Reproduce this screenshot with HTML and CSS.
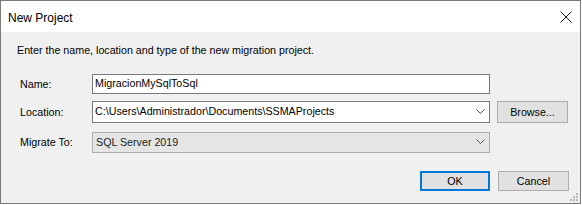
FILE: index.html
```html
<!DOCTYPE html>
<html>
<head>
<meta charset="utf-8">
<link rel="stylesheet" href="styles.css">
</head>
<body>
<div class="window">
  <div class="titlebar">
    <span class="title">New Project</span>
    <svg class="close" width="12" height="12" viewBox="0 0 12 12"><path d="M0.5 0.5 L11.5 11.5 M11.5 0.5 L0.5 11.5" stroke="#1a1a1a" stroke-width="1" fill="none"/></svg>
  </div>
  <div class="content">
    <p class="intro">Enter the name, location and type of the new migration project.</p>
    <div class="form">
      <label class="label">Name:</label>
      <div class="field">MigracionMySqlToSql</div>
      <div></div>

      <label class="label row2">Location:</label>
      <div class="field combo row2">
        <span>C:\Users\Administrador\Documents\SSMAProjects</span>
        <svg class="chev" width="9" height="6" viewBox="0 0 9 6"><polyline points="0.5,0.5 4.5,4.5 8.5,0.5" stroke="#444" stroke-width="1" fill="none"/></svg>
      </div>
      <button class="btn browse row2">Browse...</button>

      <label class="label row3">Migrate To:</label>
      <div class="field combo ro row3">
        <span>SQL Server 2019</span>
        <svg class="chev" width="9" height="6" viewBox="0 0 9 6"><polyline points="0.5,0.5 4.5,4.5 8.5,0.5" stroke="#555" stroke-width="1" fill="none"/></svg>
      </div>
      <div></div>
    </div>
    <div class="actions">
      <button class="btn ok">OK</button>
      <button class="btn cancel">Cancel</button>
    </div>
  </div>
  <svg class="grip" width="8" height="8" viewBox="0 0 8 8">
    <rect x="6" y="0" width="2" height="2" fill="#b8b8b8"/>
    <rect x="3" y="3" width="2" height="2" fill="#b8b8b8"/>
    <rect x="6" y="3" width="2" height="2" fill="#b8b8b8"/>
    <rect x="0" y="6" width="2" height="2" fill="#b8b8b8"/>
    <rect x="3" y="6" width="2" height="2" fill="#b8b8b8"/>
    <rect x="6" y="6" width="2" height="2" fill="#b8b8b8"/>
  </svg>
</div>
</body>
</html>
```
FILE: styles.css
```css
* { box-sizing: border-box; }
html, body { margin: 0; padding: 0; background: #ffffff; }
body { width: 582px; height: 205px; overflow: hidden; }

.window {
  position: relative;
  width: 581px;
  height: 204px;
  border: 1px solid #7a7a7a;
  background: #f0f0f0;
  display: flex;
  flex-direction: column;
  font-family: "Liberation Sans", Arial, sans-serif;
  font-size: 10.7px;
  line-height: 15px;
  color: #000;
}

.titlebar {
  height: 31px;
  background: #ffffff;
  display: flex;
  justify-content: space-between;
  align-items: flex-start;
  padding: 10px 8px 0 7px;
}
.title {
  font-size: 12px;
  line-height: 14px;
}
.close { display: block; }

.content {
  flex: 1;
  padding: 11px 11px 0 15px;
  display: flex;
  flex-direction: column;
}
.intro { margin: 0 0 16px 1px; }

.form {
  display: grid;
  grid-template-columns: 65px 398px 71px;
  grid-template-rows: 20px 29px 30px;
  column-gap: 7px;
  padding-left: 4px;
  align-items: start;
}
.form > .field, .form > .label { align-self: stretch; }
.row2 { margin-top: 7px; }
.row3 { margin-top: 9px; }

.label { display: flex; align-items: center; }

.field {
  border: 1px solid #7a7a7a;
  background: #ffffff;
  padding: 0 0 1px 2px;
  display: flex;
  align-items: center;
  white-space: nowrap;
  overflow: hidden;
}
.combo { justify-content: space-between; padding-right: 4px; }
.ro { background: #e5e5e5; border-color: #adadad; padding-left: 3px; color: #222; }
.chev { display: block; flex: none; }

.btn {
  font: inherit;
  color: #000;
  background: #e1e1e1;
  border: 1px solid #adadad;
  padding: 0;
  margin: 0;
}
.browse { height: 22px; margin-top: 7px; }

.actions {
  display: flex;
  justify-content: flex-end;
  gap: 8px;
  margin-top: 18px;
}
.actions .btn { height: 20px; }
.ok { width: 70px; border: 2px solid #0078d7; }
.cancel { width: 71px; }

.grip { position: absolute; right: 2px; bottom: 2px; }
```
